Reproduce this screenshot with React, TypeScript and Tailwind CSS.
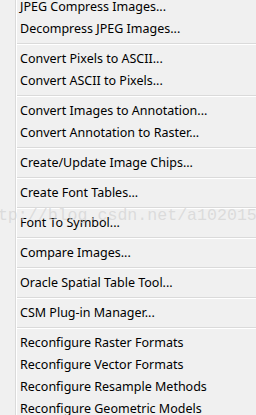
const groups: string[][] = [
  ['JPEG Compress Images...', 'Decompress JPEG Images...'],
  ['Convert Pixels to ASCII...', 'Convert ASCII to Pixels...'],
  ['Convert Images to Annotation...', 'Convert Annotation to Raster...'],
  ['Create/Update Image Chips...'],
  ['Create Font Tables...'],
  ['Font To Symbol...'],
  ['Compare Images...'],
  ['Oracle Spatial Table Tool...'],
  ['CSM Plug-in Manager...'],
  [
    'Reconfigure Raster Formats',
    'Reconfigure Vector Formats',
    'Reconfigure Resample Methods',
    'Reconfigure Geometric Models',
  ],
];

export default function App() {
  return (
    <div className="relative w-[256px] h-[415px] overflow-hidden bg-[#f0f0f0] font-['Noto_Sans',sans-serif] text-[12.5px] text-black">
      <div className="flex -mt-[4px]">
        {/* icon gutter */}
        <div className="w-[15px] shrink-0" />
        <div className="flex-1 border-l border-[#dadada]">
          <div className="border-l border-white">
            {groups.map((items, gi) => (
              <div key={gi}>
                {gi > 0 && (
                  <div className="py-[3px]">
                    <div className="h-[2px] border-t border-[#dadada] border-b border-b-white" />
                  </div>
                )}
                {items.map((label) => (
                  <div key={label} className="h-[22px] flex items-center pl-[3px] whitespace-nowrap">
                    {label}
                  </div>
                ))}
              </div>
            ))}
          </div>
        </div>
      </div>

      {/* blog watermark */}
      <div className="absolute left-[-22px] top-[206px] font-['Liberation_Mono',monospace] text-[16.6px] leading-[20px] text-[#d2d2d2]/70 whitespace-nowrap pointer-events-none">
        http://blog.csdn.net/a1020152
      </div>
    </div>
  );
}
